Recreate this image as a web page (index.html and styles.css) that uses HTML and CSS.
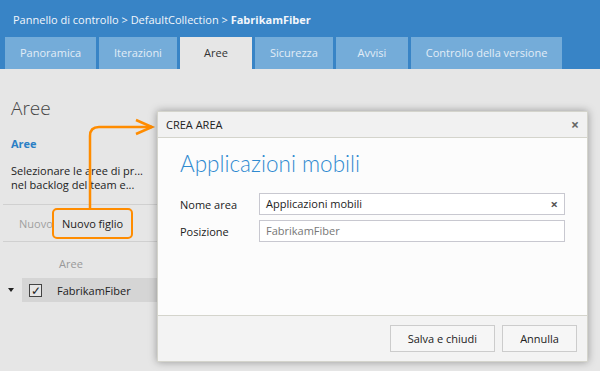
FILE: index.html
```html
<!DOCTYPE html>
<html lang="it">

<head>
    <meta charset="UTF-8">
    <title>Aree - FabrikamFiber</title>
    <link rel="stylesheet" href="styles.css">
</head>

<body>
    <div class="top-bar">
        <div class="breadcrumb">Pannello di controllo &gt; DefaultCollection &gt; <b>FabrikamFiber</b></div>
        <ul class="tabs">
            <li>Panoramica</li>
            <li>Iterazioni</li>
            <li class="active">Aree</li>
            <li>Sicurezza</li>
            <li>Avvisi</li>
            <li>Controllo della versione</li>
        </ul>
    </div>

    <div class="main-content">
        <h1>Aree</h1>
        <a href="#" class="section-link">Aree</a>
        <p class="description">Selezionare le aree di pr...<br>nel backlog del team e...</p>

        <div class="toolbar">
            <span class="muted">Nuovo</span>
            <span class="callout">Nuovo figlio</span>
        </div>

        <div class="grid-header">Aree</div>
        <div class="grid-row">
            <span class="expander"></span>
            <span class="checkbox">&#10003;</span>
            <span>FabrikamFiber</span>
        </div>
    </div>

    <!-- annotation arrow -->
    <svg class="arrow" width="160" height="110" viewBox="0 0 160 110">
        <path d="M90 109 V36 Q90 27 99 27 H152" fill="none" stroke="#ff8c00" stroke-width="2.5" />
        <polyline points="136,20 152,27 136,34" fill="none" stroke="#ff8c00" stroke-width="2.5" />
    </svg>

    <!-- Modal -->
    <div class="modal">
        <div class="modal-header">
            <span>CREA AREA</span>
            <span class="close">&#215;</span>
        </div>
        <div class="modal-body">
            <h2>Applicazioni mobili</h2>
            <div class="field">
                <label>Nome area</label>
                <div class="input">Applicazioni mobili<span class="clear">&#215;</span></div>
            </div>
            <div class="field">
                <label>Posizione</label>
                <div class="input placeholder">FabrikamFiber</div>
            </div>
        </div>
        <div class="modal-footer">
            <button>Salva e chiudi</button>
            <button>Annulla</button>
        </div>
    </div>
</body>

</html>
```

FILE: styles.css
```css
body {
    font-family: "Open Sans", "Noto Sans", sans-serif;
    margin: 0;
    padding: 0;
    background-color: #e6e6e6;
    color: #222;
    font-size: 11px;
    line-height: 15px;
    width: 600px;
    height: 371px;
    overflow: hidden;
}

.top-bar {
    background-color: #3884c6;
    height: 69px;
    display: flex;
    flex-direction: column;
    justify-content: space-between;
}

.breadcrumb {
    color: #f2f6fb;
    font-size: 11px;
    padding: 12px 0 0 13px;
}

.tabs {
    list-style-type: none;
    margin: 0;
    padding: 0 0 0 5px;
    display: flex;
    gap: 3px;
}

.tabs li {
    background-color: #74acd9;
    color: #e2edf7;
    height: 32px;
    line-height: 32px;
    min-width: 72px;
    box-sizing: border-box;
    padding: 0 15px;
    font-size: 11px;
    text-align: center;
}

.tabs li.active {
    background-color: #e6e6e6;
    color: #333;
}

.main-content {
    width: 152px;
    padding: 27px 0 0 11px;
}

.main-content h1 {
    margin: 0;
    font-size: 19px;
    line-height: 24px;
    font-weight: 300;
    color: #444;
}

.section-link {
    display: block;
    margin-top: 16px;
    color: #2b7fc5;
    font-weight: bold;
    text-decoration: none;
}

.description {
    margin: 13px 0 0 0;
    line-height: 14px;
    color: #222;
    white-space: nowrap;
}

.toolbar {
    margin: 12px 0 0 -8px;
    border-top: 1px solid #d0d0d0;
    border-bottom: 1px solid #d0d0d0;
    height: 36px;
    display: flex;
    align-items: center;
}

.toolbar .muted {
    color: #a0a0a0;
    padding: 0 0 0 16px;
    width: 33px;
    overflow: hidden;
}

.callout {
    border: 2.5px solid #ff8c00;
    border-radius: 5px;
    height: 27px;
    line-height: 27px;
    padding: 0 8px;
    color: #222;
}

.grid-header {
    color: #999;
    padding: 14px 0 0 48px;
}

.grid-row {
    margin: 7px 0 0 -11px;
    display: flex;
    align-items: center;
    height: 24px;
    width: 170px;
    background: linear-gradient(to right, transparent 22px, #d5d5d5 22px);
}

.expander {
    width: 0;
    height: 0;
    border-left: 3px solid transparent;
    border-right: 3px solid transparent;
    border-top: 4px solid #222;
    margin: 0 9px 0 8px;
}

.grid-row .checkbox {
    width: 11px;
    height: 11px;
    line-height: 11px;
    border: 1.5px solid #444;
    text-align: center;
    font-size: 12px;
    margin: 0 15px 0 6px;
    background-color: #e6e6e6;
}

.arrow {
    position: absolute;
    left: 0;
    top: 100px;
}

.modal {
    position: absolute;
    left: 157px;
    top: 111px;
    width: 431px;
    height: 251px;
    background-color: #fcfcfc;
    border: 1px solid #d4d4cc;
    box-sizing: border-box;
    box-shadow: 0 0 8px rgba(0, 0, 0, 0.35);
    display: flex;
    flex-direction: column;
}

.modal-header {
    height: 25px;
    background-color: #f1f1f1;
    border-bottom: 1px solid #d4d4cc;
    display: flex;
    justify-content: space-between;
    align-items: center;
    padding: 0 8px;
    color: #222;
}

.modal-header .close {
    font-size: 14px;
    color: #666;
    font-weight: bold;
}

.modal-body {
    flex: 1;
    padding: 11px 22px 0 22px;
}

.modal-body h2 {
    margin: 0 0 14px 0;
    font-family: Lato, "Open Sans", sans-serif;
    font-size: 22.5px;
    line-height: 30px;
    font-weight: 300;
    color: #2f8ad0;
}

.field {
    display: flex;
    align-items: center;
    margin-bottom: 5px;
}

.field label {
    width: 79px;
}

.input {
    flex: 1;
    height: 22px;
    line-height: 20px;
    border: 1px solid #c8c8d0;
    box-sizing: border-box;
    background-color: #fff;
    padding: 0 6px;
    display: flex;
    justify-content: space-between;
}

.input.placeholder {
    color: #777;
}

.input .clear {
    font-size: 13px;
    font-weight: bold;
    color: #555;
}

.modal-footer {
    height: 45px;
    background-color: #f3f3f3;
    border-top: 1px solid #d4d4cc;
    display: flex;
    justify-content: flex-end;
    align-items: center;
    gap: 7px;
    padding-right: 10px;
}

.modal-footer button {
    font-family: inherit;
    font-size: 11px;
    background-color: #f6f6f6;
    border: 1px solid #ccc;
    height: 27px;
    padding: 0 17px;
    color: #222;
}
```
